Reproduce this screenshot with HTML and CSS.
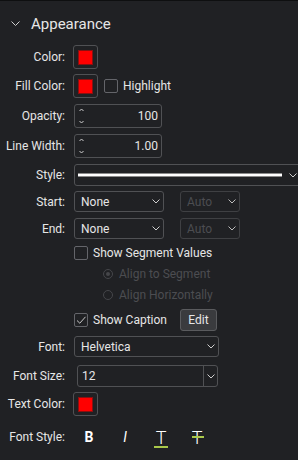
FILE: index.html
```html
<!DOCTYPE html>
<html lang="en">
<head>
    <meta charset="UTF-8">
    <title>Appearance</title>
    <link rel="stylesheet" href="styles.css">
</head>
<body>
    <div class="panel">
        <div class="section-head">
            <svg class="chev" width="9" height="6" viewBox="0 0 9 6"><path d="M0.5 0.5 L4.5 4.5 L8.5 0.5" fill="none" stroke="#cfcfcf" stroke-width="1"/></svg>
            <span>Appearance</span>
        </div>

        <div class="row h24 mt11">
            <span class="lbl">Color:</span>
            <button class="swatch"><span></span></button>
        </div>

        <div class="row h24 mt5">
            <span class="lbl">Fill Color:</span>
            <button class="swatch"><span></span></button>
            <span class="check ml6"></span>
            <span class="check-text">Highlight</span>
        </div>

        <div class="row h24 mt6">
            <span class="lbl">Opacity:</span>
            <div class="spin">
                <svg width="5" height="16" viewBox="0 0 5 16"><path d="M0.5 3 L2.5 1 L4.5 3 M0.5 13 L2.5 15 L4.5 13" fill="none" stroke="#cfcfcf" stroke-width="1"/></svg>
                <span class="val">100</span>
            </div>
        </div>

        <div class="row h24 mt6">
            <span class="lbl">Line Width:</span>
            <div class="spin">
                <svg width="5" height="16" viewBox="0 0 5 16"><path d="M0.5 3 L2.5 1 L4.5 3 M0.5 13 L2.5 15 L4.5 13" fill="none" stroke="#cfcfcf" stroke-width="1"/></svg>
                <span class="val">1.00</span>
            </div>
        </div>

        <div class="row h22 mt6">
            <span class="lbl">Style:</span>
            <div class="select style-select">
                <span class="line-sample"></span>
                <svg class="arrow" width="8" height="5" viewBox="0 0 8 5"><path d="M0.5 0.5 L4 4 L7.5 0.5" fill="none" stroke="#cfcfcf" stroke-width="1"/></svg>
            </div>
        </div>

        <div class="row h21 mt5">
            <span class="lbl">Start:</span>
            <div class="select w90">
                <span>None</span>
                <svg class="arrow" width="8" height="5" viewBox="0 0 8 5"><path d="M0.5 0.5 L4 4 L7.5 0.5" fill="none" stroke="#cfcfcf" stroke-width="1"/></svg>
            </div>
            <div class="select w60 disabled">
                <span>Auto</span>
                <svg class="arrow" width="8" height="5" viewBox="0 0 8 5"><path d="M0.5 0.5 L4 4 L7.5 0.5" fill="none" stroke="#cfcfcf" stroke-width="1"/></svg>
            </div>
        </div>

        <div class="row h21 mt6">
            <span class="lbl">End:</span>
            <div class="select w90">
                <span>None</span>
                <svg class="arrow" width="8" height="5" viewBox="0 0 8 5"><path d="M0.5 0.5 L4 4 L7.5 0.5" fill="none" stroke="#cfcfcf" stroke-width="1"/></svg>
            </div>
            <div class="select w60 disabled">
                <span>Auto</span>
                <svg class="arrow" width="8" height="5" viewBox="0 0 8 5"><path d="M0.5 0.5 L4 4 L7.5 0.5" fill="none" stroke="#cfcfcf" stroke-width="1"/></svg>
            </div>
        </div>

        <div class="row h20 mt4 indent">
            <span class="check"></span>
            <span class="check-text">Show Segment Values</span>
        </div>

        <div class="row h20 mt1 indent-radio">
            <span class="radio on"></span>
            <span class="muted">Align to Segment</span>
        </div>

        <div class="row h20 mt1 indent-radio">
            <span class="radio"></span>
            <span class="muted">Align Horizontally</span>
        </div>

        <div class="row h22 mt4 indent">
            <div class="caption-box">
                <span class="check checked">
                    <svg width="12" height="12" viewBox="0 0 12 12"><path d="M2 6.5 L4.8 9.2 L10.5 2.8" fill="none" stroke="#c8c8c8" stroke-width="1"/></svg>
                </span>
                <span class="check-text">Show Caption</span>
            </div>
            <button class="btn">Edit</button>
        </div>

        <div class="row h21 mt5">
            <span class="lbl">Font:</span>
            <div class="select w145">
                <span>Helvetica</span>
                <svg class="arrow" width="8" height="5" viewBox="0 0 8 5"><path d="M0.5 0.5 L4 4 L7.5 0.5" fill="none" stroke="#cfcfcf" stroke-width="1"/></svg>
            </div>
        </div>

        <div class="row h22 mt8">
            <span class="lbl">Font Size:</span>
            <div class="combo">
                <span class="combo-text">12</span>
                <span class="combo-btn">
                    <svg width="8" height="5" viewBox="0 0 8 5"><path d="M0.5 0.5 L4 4 L7.5 0.5" fill="none" stroke="#cfcfcf" stroke-width="1"/></svg>
                </span>
            </div>
        </div>

        <div class="row h24 mt5">
            <span class="lbl">Text Color:</span>
            <button class="swatch"><span></span></button>
        </div>

        <div class="row h24 mt9">
            <span class="lbl">Font Style:</span>
            <div class="styles">
                <span class="fs bold">B</span>
                <span class="fs italic">I</span>
                <span class="fs tee">T<i class="under"></i></span>
                <span class="fs tee">T<i class="strike"></i></span>
            </div>
        </div>
    </div>
</body>
</html>
```

FILE: styles.css
```css
* {
    margin: 0;
    padding: 0;
    box-sizing: border-box;
}

body {
    font-family: Roboto, "Noto Sans", sans-serif;
    font-size: 12px;
    color: #e6e6e6;
    background-color: #202124;
    border-top: 1px solid #0e0f10;
    height: 460px;
    overflow: hidden;
}

.panel {
    display: flex;
    flex-direction: column;
}

.section-head {
    display: flex;
    align-items: center;
    height: 20px;
    margin-top: 13px;
    padding-left: 11px;
    font-size: 15px;
}

.section-head .chev {
    margin-right: 11px;
}

.row {
    display: flex;
    align-items: center;
}

.h20 { height: 20px; }
.h21 { height: 21px; }
.h22 { height: 22px; }
.h24 { height: 24px; }

.mt1 { margin-top: 1px; }
.mt4 { margin-top: 4px; }
.mt5 { margin-top: 5px; }
.mt6 { margin-top: 6px; }
.mt8 { margin-top: 8px; }
.mt9 { margin-top: 9px; }
.mt11 { margin-top: 11px; }
.ml6 { margin-left: 6px; }

.indent { padding-left: 74px; }
.indent-radio { padding-left: 103px; }

.lbl {
    flex: none;
    width: 66px;
    padding-right: 1px;
    margin-right: 8px;
    text-align: right;
}

/* colour buttons */
.swatch {
    width: 25px;
    height: 24px;
    margin-left: -1px;
    background: transparent;
    border: 1px solid #505154;
    border-radius: 3px;
    display: flex;
    align-items: center;
    justify-content: center;
}

.swatch span {
    width: 15px;
    height: 15px;
    background-color: #ff0000;
    border: 1px solid #8a1010;
}

/* checkbox + radio */
.check {
    flex: none;
    width: 14px;
    height: 14px;
    border: 1px solid #64656a;
    border-radius: 2px;
    display: flex;
    align-items: center;
    justify-content: center;
}

.check-text {
    margin-left: 5px;
}

.radio {
    flex: none;
    width: 10px;
    height: 10px;
    border: 1px solid #45464a;
    border-radius: 50%;
    display: flex;
    align-items: center;
    justify-content: center;
    margin-right: 6px;
}

.radio.on::after {
    content: "";
    width: 4px;
    height: 4px;
    border-radius: 50%;
    background-color: #45464a;
}

.muted {
    color: #4c4d51;
}

/* spin boxes */
.spin {
    width: 88px;
    height: 24px;
    border: 1px solid #505154;
    border-radius: 3px;
    display: flex;
    align-items: center;
    padding: 0 3px 0 4px;
}

.spin .val {
    flex: 1;
    text-align: right;
}

/* dropdowns */
.select {
    height: 100%;
    border: 1px solid #505154;
    border-radius: 3px;
    display: flex;
    align-items: center;
    justify-content: space-between;
    padding: 0 3px 0 6px;
}

.w90 { width: 90px; }
.w145 { width: 145px; }

.w60 {
    width: 60px;
    margin-left: 16px;
}

.select.disabled {
    border-color: #3f4043;
    color: #4c4d51;
}

.select.disabled .arrow path {
    stroke: #bdbdbd;
}

.style-select {
    width: 232px;
    padding-left: 3px;
    justify-content: flex-start;
}

.line-sample {
    width: 204px;
    height: 4px;
    background-color: #ffffff;
    border-top: 1px solid #8a8a8a;
    border-bottom: 1px solid #8a8a8a;
}

.style-select .arrow {
    margin-left: 7px;
}

.combo {
    width: 141px;
    height: 100%;
    margin-left: 3px;
    border: 1px solid #505154;
    border-radius: 3px;
    display: flex;
    align-items: center;
}

.combo-text {
    flex: 1;
    padding-left: 4px;
}

.combo-btn {
    width: 14px;
    height: 100%;
    border-left: 1px solid #505154;
    display: flex;
    align-items: center;
    justify-content: center;
}

/* caption */
.caption-box {
    width: 106px;
    display: flex;
    align-items: center;
}

.btn {
    width: 37px;
    height: 22px;
    background-color: #3a3b3e;
    border: 1px solid #5a5b5e;
    border-radius: 3px;
    color: #e6e6e6;
    font-family: inherit;
    font-size: 12px;
}

/* font style toggles */
.styles {
    display: flex;
    gap: 8px;
    margin-left: 1px;
}

.fs {
    position: relative;
    width: 28px;
    height: 24px;
    display: flex;
    align-items: center;
    justify-content: center;
    color: #ffffff;
}

.bold {
    font-weight: bold;
    font-size: 14px;
}

.italic {
    font-style: italic;
    font-size: 14px;
}

.tee {
    font-size: 18px;
    font-weight: 300;
}

.under {
    position: absolute;
    left: 7px;
    top: 21px;
    width: 14px;
    height: 2px;
    background-color: #a9c84a;
}

.strike {
    position: absolute;
    left: 9px;
    top: 11px;
    width: 12px;
    height: 2px;
    background-color: #a9c84a;
}
```
